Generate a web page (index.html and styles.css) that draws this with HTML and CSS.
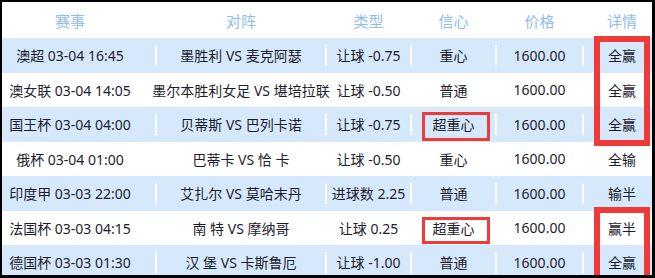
FILE: index.html
```html
<!DOCTYPE html>
<html lang="zh-CN">
<head>
<meta charset="utf-8">
<title>推荐记录</title>
<link rel="stylesheet" href="styles.css">
</head>
<body>
<div class="frame">
  <div class="table">
    <div class="row head">
      <div class="c c1">赛事</div><div class="c c2">对阵</div><div class="c c3">类型</div><div class="c c4">信心</div><div class="c c5">价格</div><div class="c c6">详情</div>
    </div>
    <div class="row alt">
      <div class="c c1">澳超 03-04 16:45</div><div class="c c2">墨胜利 VS 麦克阿瑟</div><div class="c c3">让球 -0.75</div><div class="c c4">重心</div><div class="c c5">1600.00</div><div class="c c6">全赢</div>
    </div>
    <div class="row">
      <div class="c c1">澳女联 03-04 14:05</div><div class="c c2">墨尔本胜利女足 VS 堪培拉联</div><div class="c c3">让球 -0.50</div><div class="c c4">普通</div><div class="c c5">1600.00</div><div class="c c6">全赢</div>
    </div>
    <div class="row alt">
      <div class="c c1">国王杯 03-04 04:00</div><div class="c c2">贝蒂斯 VS 巴列卡诺</div><div class="c c3">让球 -0.75</div><div class="c c4">超重心</div><div class="c c5">1600.00</div><div class="c c6">全赢</div>
    </div>
    <div class="row">
      <div class="c c1">俄杯 03-04 01:00</div><div class="c c2">巴蒂卡 VS 恰 卡</div><div class="c c3">让球 -0.50</div><div class="c c4">重心</div><div class="c c5">1600.00</div><div class="c c6">全输</div>
    </div>
    <div class="row alt">
      <div class="c c1">印度甲 03-03 22:00</div><div class="c c2">艾扎尔 VS 莫哈末丹</div><div class="c c3">进球数 2.25</div><div class="c c4">普通</div><div class="c c5">1600.00</div><div class="c c6">输半</div>
    </div>
    <div class="row">
      <div class="c c1">法国杯 03-03 04:15</div><div class="c c2">南 特 VS 摩纳哥</div><div class="c c3">让球 0.25</div><div class="c c4">超重心</div><div class="c c5">1600.00</div><div class="c c6">赢半</div>
    </div>
    <div class="row alt">
      <div class="c c1">德国杯 03-03 01:30</div><div class="c c2">汉 堡 VS 卡斯鲁厄</div><div class="c c3">让球 -1.00</div><div class="c c4">普通</div><div class="c c5">1600.00</div><div class="c c6">全赢</div>
    </div>
  </div>
  <div class="mark mark-a"></div>
  <div class="mark mark-b"></div>
  <div class="mark mark-c"></div>
  <div class="mark mark-d"></div>
</div>
</body>
</html>
```

FILE: styles.css
```css
html, body {
  margin: 0;
  padding: 0;
  background: #000;
}
.frame {
  position: relative;
  width: 650px;
  height: 273px;
  margin: 2px 3px 3px 2px;
  background: #fff;
  overflow: hidden;
  font-family: "Noto Sans", "Noto Sans CJK SC", sans-serif;
  font-size: 14px;
  color: #1d1d2c;
}
.table {
  display: flex;
  flex-direction: column;
}
.row {
  display: grid;
  grid-template-columns: 155px 170px 85px 85px 87px 68px;
  height: 34.5px;
}
.row.head {
  height: 36px;
  color: #8fbdf0;
  font-size: 15px;
}
.row.alt {
  background: #d6e9fc;
}
.c {
  display: flex;
  align-items: center;
  justify-content: center;
  white-space: nowrap;
  padding-right: 2px;
  background-image: linear-gradient(#fff, #fff);
  background-repeat: no-repeat;
  background-position: right center;
  background-size: 2px 21px;
}
.head .c { background-image: none; }
.c1 { padding-right: 19px; }
.c6 {
  padding-left: 8px;
  padding-right: 0;
  background-image: none;
}
.mark {
  position: absolute;
  border: 6px solid #f03a3a;
  box-sizing: border-box;
}
.mark-a { left: 592px; top: 34px; width: 56px; height: 110px; }
.mark-b { left: 592px; top: 205px; width: 56px; height: 80px; }
.mark-c { left: 420px; top: 110px; width: 68px; height: 29px; border-width: 3px; }
.mark-d { left: 420px; top: 215px; width: 68px; height: 27px; border-width: 3px; }
```
